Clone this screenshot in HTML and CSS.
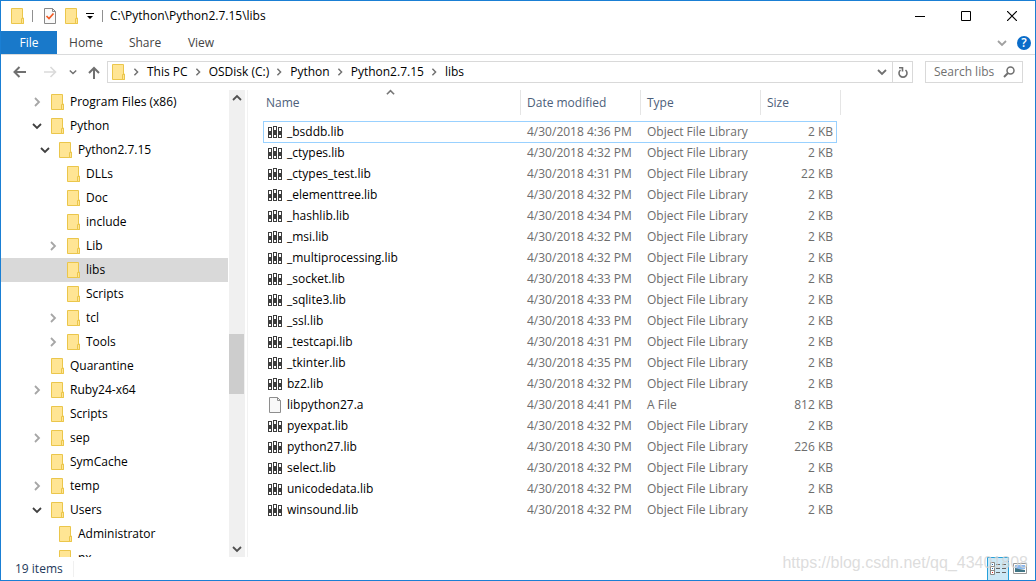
FILE: index.html
```
<!DOCTYPE html>
<html lang="en">
<head>
<meta charset="utf-8">
<title>C:\Python\Python2.7.15\libs</title>
<link rel="stylesheet" href="styles.css">
</head>
<body>
<svg class="defs" aria-hidden="true">
  <symbol id="folder" viewBox="0 0 14 16"><path d="M.5.5h11v9.500h1v5.500H.5z" fill="#ffe594" stroke="#ebc64b"/><path d="M10.500 15.500v-5h2v5z" fill="#ffe594" stroke="#ebc64b"/></symbol>
  <symbol id="right" viewBox="0 0 10 10"><path d="M3 1l4 4-4 4" fill="none" stroke="currentColor" stroke-width="1.800"/></symbol>
  <symbol id="down" viewBox="0 0 10 10"><path d="M1 3l4 4 4-4" fill="none" stroke="currentColor" stroke-width="1.800"/></symbol>
  <symbol id="up" viewBox="0 0 10 10"><path d="M1 7l4-4 4 4" fill="none" stroke="currentColor" stroke-width="1.800"/></symbol>
  <symbol id="lib" viewBox="0 0 14 12"><path d="M0 1h4v11H0zM5 0h4v12H5zM10 1h4v11h-4z" fill="#3c3c3c"/><path d="M1 2h2v3H1zM6 1h2v3H6zM11 2h2v3h-2zM1 9h2v2H1zM6 9h2v2H6zM11 9h2v2h-2z" fill="#fff"/></symbol>
  <symbol id="page" viewBox="0 0 14 16"><path d="M1.500.5h8l3 3v12h-11z" fill="#f8f8f8" stroke="#8e8e8e"/><path d="M9.500.5v3h3" fill="none" stroke="#8e8e8e"/></symbol>
</svg>
<div class="window">
  <header class="titlebar">
    <svg class="folder"><use href="#folder"/></svg>
    <span class="divider"></span>
    <button class="tool check" aria-label="Properties"><svg viewBox="0 0 14 16" width="14" height="16"><path d="M1.500.5h8l3 3v12h-11z" fill="#fafafa" stroke="#888"/><path d="M9.500.5v3h3" fill="none" stroke="#888"/><path d="M3.500 8l2.500 2.500 4.500-5" fill="none" stroke="#f15a24" stroke-width="1.700"/></svg></button>
    <button class="tool" aria-label="New folder"><svg class="folder"><use href="#folder"/></svg></button>
    <button class="tool more" aria-label="Customize toolbar"><svg width="8" height="8" viewBox="0 0 8 8"><path d="M0 1h8v1H0zM1 4h6L4 7z"/></svg></button>
    <span class="divider"></span>
    <h1 class="title">C:\Python\Python2.7.15\libs</h1>
    <div class="caption-buttons">
      <button class="caption" aria-label="Minimize"><svg width="10" height="10"><path d="M0 5.500h10" stroke="#000"/></svg></button>
      <button class="caption" aria-label="Maximize"><svg width="10" height="10"><path d="M.5.5h9v9h-9z" fill="none" stroke="#000"/></svg></button>
      <button class="caption" aria-label="Close"><svg width="10" height="10"><path d="M0 0l10 10M10 0L0 10" stroke="#000" stroke-width="1.200"/></svg></button>
    </div>
  </header>
  <nav class="ribbon">
    <button class="tab file">File</button>
    <button class="tab">Home</button>
    <button class="tab">Share</button>
    <button class="tab">View</button>
    <div class="ribbon-end">
      <button class="expand" aria-label="Expand ribbon"><svg class="arrow"><use href="#down"/></svg></button>
      <button class="help" aria-label="Help">?</button>
    </div>
  </nav>
  <div class="address-row">
    <button class="nav" aria-label="Back"><svg width="14" height="12" viewBox="0 0 14 12"><path d="M13 6H2M6.500 1l-5 5 5 5" fill="none" stroke="#707070" stroke-width="2"/></svg></button>
    <button class="nav" aria-label="Forward"><svg width="14" height="12" viewBox="0 0 14 12"><path d="M1 6h11M7.500 1l5 5-5 5" fill="none" stroke="#dadada" stroke-width="1.600"/></svg></button>
    <button class="nav recent" aria-label="Recent locations"><svg class="arrow small"><use href="#down"/></svg></button>
    <button class="nav parent" aria-label="Up"><svg width="12" height="13" viewBox="0 0 12 13"><path d="M6 13V2M1 7l5-5 5 5" fill="none" stroke="#707070" stroke-width="2"/></svg></button>
    <div class="address">
      <svg class="folder"><use href="#folder"/></svg>
      <svg class="arrow crumb-arrow"><use href="#right"/></svg><a class="crumb" href="#">This PC</a>
      <svg class="arrow crumb-arrow"><use href="#right"/></svg><a class="crumb" href="#">OSDisk (C:)</a>
      <svg class="arrow crumb-arrow"><use href="#right"/></svg><a class="crumb" href="#">Python</a>
      <svg class="arrow crumb-arrow"><use href="#right"/></svg><a class="crumb" href="#">Python2.7.15</a>
      <svg class="arrow crumb-arrow"><use href="#right"/></svg><a class="crumb" href="#">libs</a>
      <button class="history" aria-label="Previous locations"><svg class="arrow"><use href="#down"/></svg></button>
      <button class="refresh" aria-label="Refresh"><svg width="10" height="11" viewBox="0 0 10 11"><path d="M2.500 3A4 4 0 1 0 7.500 3M1 .8h3.500v3.700" fill="none" stroke="#707070" stroke-width="1.600"/></svg></button>
    </div>
    <label class="search"><input type="text" placeholder="Search libs" aria-label="Search libs"><svg width="12" height="12" viewBox="0 0 12 12"><circle cx="7.500" cy="4.500" r="3.500" fill="none" stroke="#707070" stroke-width="1.500"/><path d="M5 7l-4 4" stroke="#707070" stroke-width="2"/></svg></label>
  </div>
  <main class="content">
    <aside class="sidebar">
      <ul class="tree" id="tree"></ul>
      <div class="scrollbar">
        <button class="scroll-button" aria-label="Scroll up"><svg class="arrow"><use href="#up"/></svg></button>
        <div class="thumb"></div>
        <button class="scroll-button" aria-label="Scroll down"><svg class="arrow"><use href="#down"/></svg></button>
      </div>
    </aside>
    <section class="files">
      <table class="list">
        <colgroup><col class="col-name"><col class="col-date"><col class="col-type"><col class="col-size"></colgroup>
        <thead><tr><th>Name<svg class="sort"><use href="#up"/></svg></th><th>Date modified</th><th>Type</th><th>Size</th></tr></thead>
        <tbody id="rows"></tbody>
      </table>
    </section>
  </main>
  <footer class="status">
    <span class="count">19 items</span>
    <div class="views">
      <button class="view active" aria-label="Details view"><svg width="17" height="14" viewBox="0 0 17 14"><path d="M.5.5h4v12h-4zM.5 4.500h4M.5 8.500h4" fill="#fff" stroke="#888"/><path d="M6 2.500h4M12 2.500h4M6 6.500h4M12 6.500h4M6 10.500h4M12 10.500h4" stroke="#666"/><path d="M2 2h1v1H2z" fill="#26a"/><path d="M2 6h1v1H2z" fill="#26a"/><path d="M2 10h1v1H2z" fill="#d22"/></svg></button>
      <button class="view" aria-label="Thumbnail view"><svg width="14" height="11" viewBox="0 0 14 11"><path d="M.5.5h13v10H.5z" fill="#fff" stroke="#999"/><path d="M2 2h10v4H2z" fill="#8ab8ee"/><path d="M2 5l4 1 6 1v2H2z" fill="#3f7484"/></svg></button>
    </div>
    <span class="watermark">https://blog.csdn.net/qq_43401808</span>
  </footer>
</div>
<script src="app.js"></script>
</body>
</html>
```
FILE: styles.css
```
* { box-sizing: border-box; }
body { margin: 0; font: 12px/16px "Open Sans", "Noto Sans", sans-serif; color: #000; background: #fff; }
button { margin: 0; padding: 0; border: 0; background: none; font: inherit; color: inherit; display: flex; align-items: center; justify-content: center; }
svg { display: block; flex: none; }
.defs { position: absolute; width: 0; height: 0; }
.window { height: 100vh; display: flex; flex-direction: column; border: 1px solid #1a7fd4; overflow: hidden; }
.folder { width: 14px; height: 16px; }
.arrow { width: 10px; height: 10px; }
.titlebar { display: flex; align-items: center; height: 30px; flex: none; padding-left: 10px; }
.divider { width: 1px; height: 12px; background: #909090; margin-left: 7px; }
.check { margin-left: 10px; }
.tool + .tool { margin-left: 8px; }
.titlebar .more { margin-left: 7px; }
.more + .divider { margin-left: 8px; }
.title { margin: 0 0 0 7px; font-size: 12px; font-weight: 400; }
.caption-buttons { display: flex; margin-left: auto; }
.caption { width: 46px; height: 30px; }
.ribbon { display: flex; height: 24px; flex: none; border-bottom: 1px solid #dadbdc; color: #444; }
.tab { width: 58px; }
.file { width: 56px; background: #1979ca; color: #fff; }
.tab + .tab + .tab { width: 60px; }
.tab + .tab + .tab + .tab { width: 52px; }
.ribbon-end { margin-left: auto; display: flex; align-items: center; gap: 10px; padding-right: 4px; color: #a0a0a0; }
.help { width: 14px; height: 14px; border-radius: 50%; background: #0a6cc9; color: #fff; font-weight: 600; }
.address-row { display: flex; align-items: center; height: 34px; flex: none; padding: 0 12px; color: #707070; }
.nav { width: 14px; height: 22px; }
.nav + .nav { margin-left: 16px; }
.nav + .recent { width: 8px; margin-left: 12px; }
.small { width: 8px; height: 8px; }
.nav + .parent { width: 12px; margin-left: 11px; }
.address { flex: 1; display: flex; align-items: center; height: 22px; margin-left: 7px; border: 1px solid #d9d9d9; padding-left: 4px; }
.crumb-arrow { width: 8px; height: 8px; margin: 0 7px 0 6px; }
.crumb { color: #000; text-decoration: none; }
.history { margin-left: auto; width: 20px; height: 20px; }
.refresh { width: 20px; height: 20px; border-left: 1px solid #d9d9d9; }
.search { width: 98px; height: 22px; margin-left: 12px; border: 1px solid #d9d9d9; display: flex; align-items: center; padding: 0 7px 0 8px; }
.search input { flex: 1; min-width: 0; padding: 0; border: 0; outline: 0; font: inherit; background: none; }
.search input::placeholder { color: #707070; opacity: 1; }
.content { display: flex; flex: 1; min-height: 0; margin-top: 1px; }
.sidebar { display: flex; width: 247px; flex: none; border-right: 1px solid #f2f2f2; }
.tree { flex: 1; margin: 0; padding: 0; list-style: none; overflow: hidden; }
.tree-item { display: flex; align-items: center; height: 24px; padding-left: 31px; white-space: nowrap; }
.level-2 { padding-left: 39px; }
.level-3 { padding-left: 47px; }
.tree-item .folder { margin: 0 5px 0 9px; }
.tree-item .arrow { color: #a6a6a6; }
.tree-item .open { color: #404040; }
.blank { width: 10px; }
.selected { background: #d9d9d9; }
.scrollbar { width: 16px; margin: 0 2px 0 1px; background: #f0f0f0; display: flex; flex-direction: column; color: #505050; }
.scroll-button { width: 15px; height: 16px; }
.scroll-button:last-child { margin-top: auto; }
.thumb { width: 15px; height: 60px; margin-top: 228px; background: #cdcdcd; }
.files { flex: 1; padding-left: 15px; }
.list { width: 578px; table-layout: fixed; border-collapse: separate; border-spacing: 0; color: #6d6d6d; }
.col-name { width: 258px; }
.col-date, .col-type { width: 120px; }
.col-size { width: 80px; }
.list th { position: relative; height: 25px; padding: 0 0 0 6px; text-align: left; font-weight: 400; color: #4c607a; border-right: 1px solid #e5e5e5; }
.list th:first-child { padding-left: 3px; }
.list thead::after { content: ""; display: table-row; height: 6px; }
.sort { position: absolute; top: -2px; left: 50%; margin-left: -6px; width: 9px; height: 9px; color: #777; }
.list td { height: 21px; padding: 0 0 0 6px; white-space: nowrap; }
.list td:first-child { padding-left: 5px; }
.list td:last-child { text-align: right; padding-right: 8px; }
.name { display: flex; align-items: center; gap: 5px; color: #000; }
.name svg { width: 14px; height: 12px; }
.name .page { height: 16px; }
.first { position: relative; }
.first td:first-child::after { content: ""; position: absolute; inset: 0 4px -1px 0; border: 1px solid #99d1ff; }
.status { position: relative; display: flex; align-items: center; height: 23px; flex: none; padding: 0 4px 0 14px; color: #1e395b; }
.count { padding-right: 10px; border-right: 1px solid #f0f0f0; }
.views { display: flex; margin-left: auto; }
.view { width: 22px; height: 23px; }
.active { background: #cce8f6; border: 1px solid #26a0da; border-bottom: 0; }
.watermark { position: absolute; right: 7px; bottom: 7px; font: 16px/20px "Liberation Sans", sans-serif; color: #d4d4d4cc; pointer-events: none; }
```
FILE: app.js
```
const tree = [
  ["Program Files (x86)", 1, "right"], ["Python", 1, "down"], ["Python2.7.15", 2, "down"],
  ["DLLs", 3], ["Doc", 3], ["include", 3], ["Lib", 3, "right"], ["libs", 3], ["Scripts", 3],
  ["tcl", 3, "right"], ["Tools", 3, "right"], ["Quarantine", 1], ["Ruby24-x64", 1, "right"],
  ["Scripts", 1], ["sep", 1, "right"], ["SymCache", 1], ["temp", 1, "right"],
  ["Users", 1, "down"], ["Administrator", 2], ["nx", 2]
];
document.getElementById("tree").innerHTML = tree.map(([name, level, arrow]) =>
  `<li class="tree-item level-${level}${name === "libs" ? " selected" : ""}">` +
  (arrow ? `<svg class="arrow${arrow === "down" ? " open" : ""}"><use href="#${arrow}"/></svg>` : `<span class="blank"></span>`) +
  `<svg class="folder"><use href="#folder"/></svg>${name}</li>`).join("");

const files = [
  ["_bsddb.lib", "4:36", 2], ["_ctypes.lib", "4:32", 2], ["_ctypes_test.lib", "4:31", 22],
  ["_elementtree.lib", "4:32", 2], ["_hashlib.lib", "4:34", 2], ["_msi.lib", "4:32", 2],
  ["_multiprocessing.lib", "4:32", 2], ["_socket.lib", "4:33", 2], ["_sqlite3.lib", "4:33", 2],
  ["_ssl.lib", "4:33", 2], ["_testcapi.lib", "4:31", 2], ["_tkinter.lib", "4:35", 2],
  ["bz2.lib", "4:32", 2], ["libpython27.a", "4:41", 812], ["pyexpat.lib", "4:32", 2],
  ["python27.lib", "4:30", 226], ["select.lib", "4:32", 2], ["unicodedata.lib", "4:32", 2],
  ["winsound.lib", "4:32", 2]
];
document.getElementById("rows").innerHTML = files.map(([name, time, size], i) => {
  const isLib = name.endsWith(".lib");
  return `<tr${i === 0 ? ' class="first"' : ""}><td><span class="name"><svg class="${isLib ? "lib" : "page"}"><use href="#${isLib ? "lib" : "page"}"/></svg>${name}</span></td>` +
    `<td>4/30/2018 ${time} PM</td><td>${isLib ? "Object File Library" : "A File"}</td><td>${size} KB</td></tr>`;
}).join("");
```
